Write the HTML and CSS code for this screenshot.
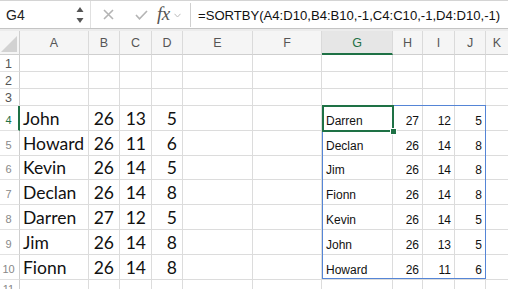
FILE: index.html
```html
<!DOCTYPE html>
<html>
<head>
<meta charset="utf-8">
<link rel="stylesheet" href="styles.css">
</head>
<body>
<div class="app">
  <div class="fbar">
    <div class="namebox">
      <span class="nb-text">G4</span>
      <svg class="spin" width="8" height="18" viewBox="0 0 8 18"><path d="M4 1 L7.5 6 L0.5 6 Z" fill="#555"/><path d="M0.5 12 L7.5 12 L4 17 Z" fill="#555"/></svg>
    </div>
    <div class="ficons">
      <svg class="ic-x" width="11" height="11" viewBox="0 0 11 11"><path d="M1 1 L10 10 M10 1 L1 10" stroke="#b4b4b4" stroke-width="1.6" fill="none"/></svg>
      <svg class="ic-check" width="13" height="10" viewBox="0 0 13 10"><path d="M1 5 L4.5 8.8 L12 1" stroke="#b4b4b4" stroke-width="1.6" fill="none"/></svg>
      <span class="fx">fx</span>
      <svg class="ic-chev" width="7" height="5" viewBox="0 0 7 5"><path d="M0.5 0.8 L3.5 4 L6.5 0.8" stroke="#bbb" stroke-width="1" fill="none"/></svg>
    </div>
    <div class="finput">=SORTBY(A4:D10,B4:B10,-1,C4:C10,-1,D4:D10,-1)</div>
  </div>
  <div class="gap"></div>
  <div class="sheet">
    <div class="grid">
      <div class="ch corner"><svg width="16" height="16" viewBox="0 0 16 16"><path d="M0 16 L16 0 L16 16 Z" fill="#d2d2d2"/></svg></div>
      <div class="ch">A</div><div class="ch">B</div><div class="ch">C</div><div class="ch">D</div><div class="ch">E</div><div class="ch">F</div><div class="ch sel">G</div><div class="ch">H</div><div class="ch">I</div><div class="ch">J</div><div class="ch last">K</div>

      <div class="rh sm">1</div><div class="c"></div><div class="c"></div><div class="c"></div><div class="c"></div><div class="c"></div><div class="c"></div><div class="c"></div><div class="c"></div><div class="c"></div><div class="c"></div><div class="c last"></div>
      <div class="rh sm">2</div><div class="c"></div><div class="c"></div><div class="c"></div><div class="c"></div><div class="c"></div><div class="c"></div><div class="c"></div><div class="c"></div><div class="c"></div><div class="c"></div><div class="c last"></div>
      <div class="rh sm">3</div><div class="c"></div><div class="c"></div><div class="c"></div><div class="c"></div><div class="c"></div><div class="c"></div><div class="c"></div><div class="c"></div><div class="c"></div><div class="c"></div><div class="c last"></div>

      <div class="rh selr">4</div><div class="c big">John</div><div class="c big n">26</div><div class="c big n">13</div><div class="c big n">5</div><div class="c"></div><div class="c"></div><div class="c sm2">Darren</div><div class="c sm2 n">27</div><div class="c sm2 n">12</div><div class="c sm2 n">5</div><div class="c last"></div>
      <div class="rh">5</div><div class="c big">Howard</div><div class="c big n">26</div><div class="c big n">11</div><div class="c big n">6</div><div class="c"></div><div class="c"></div><div class="c sm2">Declan</div><div class="c sm2 n">26</div><div class="c sm2 n">14</div><div class="c sm2 n">8</div><div class="c last"></div>
      <div class="rh">6</div><div class="c big">Kevin</div><div class="c big n">26</div><div class="c big n">14</div><div class="c big n">5</div><div class="c"></div><div class="c"></div><div class="c sm2">Jim</div><div class="c sm2 n">26</div><div class="c sm2 n">14</div><div class="c sm2 n">8</div><div class="c last"></div>
      <div class="rh">7</div><div class="c big">Declan</div><div class="c big n">26</div><div class="c big n">14</div><div class="c big n">8</div><div class="c"></div><div class="c"></div><div class="c sm2">Fionn</div><div class="c sm2 n">26</div><div class="c sm2 n">14</div><div class="c sm2 n">8</div><div class="c last"></div>
      <div class="rh">8</div><div class="c big">Darren</div><div class="c big n">27</div><div class="c big n">12</div><div class="c big n">5</div><div class="c"></div><div class="c"></div><div class="c sm2">Kevin</div><div class="c sm2 n">26</div><div class="c sm2 n">14</div><div class="c sm2 n">5</div><div class="c last"></div>
      <div class="rh">9</div><div class="c big">Jim</div><div class="c big n">26</div><div class="c big n">14</div><div class="c big n">8</div><div class="c"></div><div class="c"></div><div class="c sm2">John</div><div class="c sm2 n">26</div><div class="c sm2 n">13</div><div class="c sm2 n">5</div><div class="c last"></div>
      <div class="rh">10</div><div class="c big">Fionn</div><div class="c big n">26</div><div class="c big n">14</div><div class="c big n">8</div><div class="c"></div><div class="c"></div><div class="c sm2">Howard</div><div class="c sm2 n">26</div><div class="c sm2 n">11</div><div class="c sm2 n">6</div><div class="c last"></div>
      <div class="rh r11">11</div><div class="c"></div><div class="c"></div><div class="c"></div><div class="c"></div><div class="c"></div><div class="c"></div><div class="c"></div><div class="c"></div><div class="c"></div><div class="c"></div><div class="c last"></div>
    </div>
    <div class="spill"></div>
    <div class="selbox"><div class="handle"></div></div>
  </div>
</div>
</body>
</html>
```
FILE: styles.css
```css
* { box-sizing: border-box; }
html, body { margin: 0; padding: 0; background: #fff; }
body { width: 508px; height: 289px; overflow: hidden; font-family: "Liberation Sans", Arial, sans-serif; }
.app { width: 508px; height: 289px; overflow: hidden; }

.fbar {
  height: 29px;
  display: flex;
  align-items: stretch;
  border-top: 1px solid #d4d4d4;
  border-bottom: 1px solid #c4c4c4;
  background: #fff;
}
.namebox {
  flex: 0 0 91px;
  display: flex;
  align-items: center;
  justify-content: space-between;
  padding: 0 6px 0 6px;
  border-right: 1px solid #e0e0e0;
}
.nb-text { font-size: 14px; color: #222; }
.ficons {
  flex: 0 0 99px;
  display: flex;
  align-items: center;
  padding-left: 12px;
}
.ic-x { flex: none; margin-right: 21px; }
.ic-check { flex: none; margin-right: 9px; }
.fx {
  flex: none;
  font-family: "Liberation Serif", "Times New Roman", serif;
  font-style: italic;
  font-size: 19px;
  color: #555;
  letter-spacing: -0.5px;
  margin-right: 4px;
  margin-top: -2px;
}
.ic-chev { flex: none; margin-top: 2px; }
.finput {
  flex: 1 1 auto;
  min-width: 0;
  border-left: 1px solid #d0d0d0;
  margin: 2px 0 1px 0;
  padding-left: 7px;
  display: flex;
  align-items: center;
  font-size: 13.1px;
  color: #111;
  white-space: nowrap;
  overflow: hidden;
}
.gap { height: 2px; background: #ececec; }

.sheet { position: relative; }
.grid {
  display: grid;
  grid-template-columns: 20px 69px 31px 32px 31px 70px 69px 71px 30px 32px 31px 22px;
  grid-template-rows: 24px 17px 17px 17px 25px 25px 24px 25px 25px 25px 25px 20px;
}
.ch {
  background: #f5f5f5;
  border-right: 1px solid #dadada;
  border-bottom: 1px solid #cfcfcf;
  display: flex;
  align-items: center;
  justify-content: center;
  font-size: 12.5px;
  color: #555;
  padding-top: 1px;
}
.ch.corner { align-items: flex-end; justify-content: flex-end; padding: 0 2px 2px 0; border-right-color: #cfcfcf; }
.ch.sel { background: #e6e6e6; color: #1e7145; border-bottom: 2px solid #1e7145; }
.ch.last { border-right: none; }

.rh {
  border-right: 1px solid #cfcfcf;
  border-bottom: 1px solid #e2e2e2;
  display: flex;
  align-items: center;
  justify-content: center;
  font-size: 11px;
  color: #888;
  padding-top: 3px;
  padding-right: 2px;
}
.rh.sm { font-size: 12.5px; color: #555; padding-top: 1px; }
.rh.selr { color: #1e7145; border-right: 2px solid #1e7145; padding-right: 1px; }
.rh.r11 { align-items: flex-start; padding-top: 4px; line-height: 11px; }

.c {
  border-right: 1px solid #dcdcdc;
  border-bottom: 1px solid #dcdcdc;
  display: flex;
  align-items: flex-end;
  white-space: nowrap;
  overflow: visible;
}
.c.last { border-right: none; }
.big {
  font-family: Lato, "Open Sans", sans-serif;
  font-size: 17.5px;
  line-height: 20px;
  color: #111;
  padding: 0 0 1px 3px;
}
.big.n { justify-content: flex-end; padding: 0 5px 1px 0; }
.sm2 {
  font-size: 12px;
  line-height: 15px;
  color: #111;
  padding: 0 0 1px 4px;
}
.sm2.n { justify-content: flex-end; padding: 0 3px 1px 0; }

.spill {
  position: absolute;
  left: 322px;
  top: 74px;
  width: 164px;
  height: 174px;
  border: 1.5px solid #5585d6;
  pointer-events: none;
}
.selbox {
  position: absolute;
  left: 322px;
  top: 74px;
  width: 72px;
  height: 27px;
  border: 2px solid #1e7145;
}
.handle {
  position: absolute;
  right: -5px;
  bottom: -5px;
  width: 7px;
  height: 7px;
  background: #1e7145;
  border: 1px solid #fff;
}
```
